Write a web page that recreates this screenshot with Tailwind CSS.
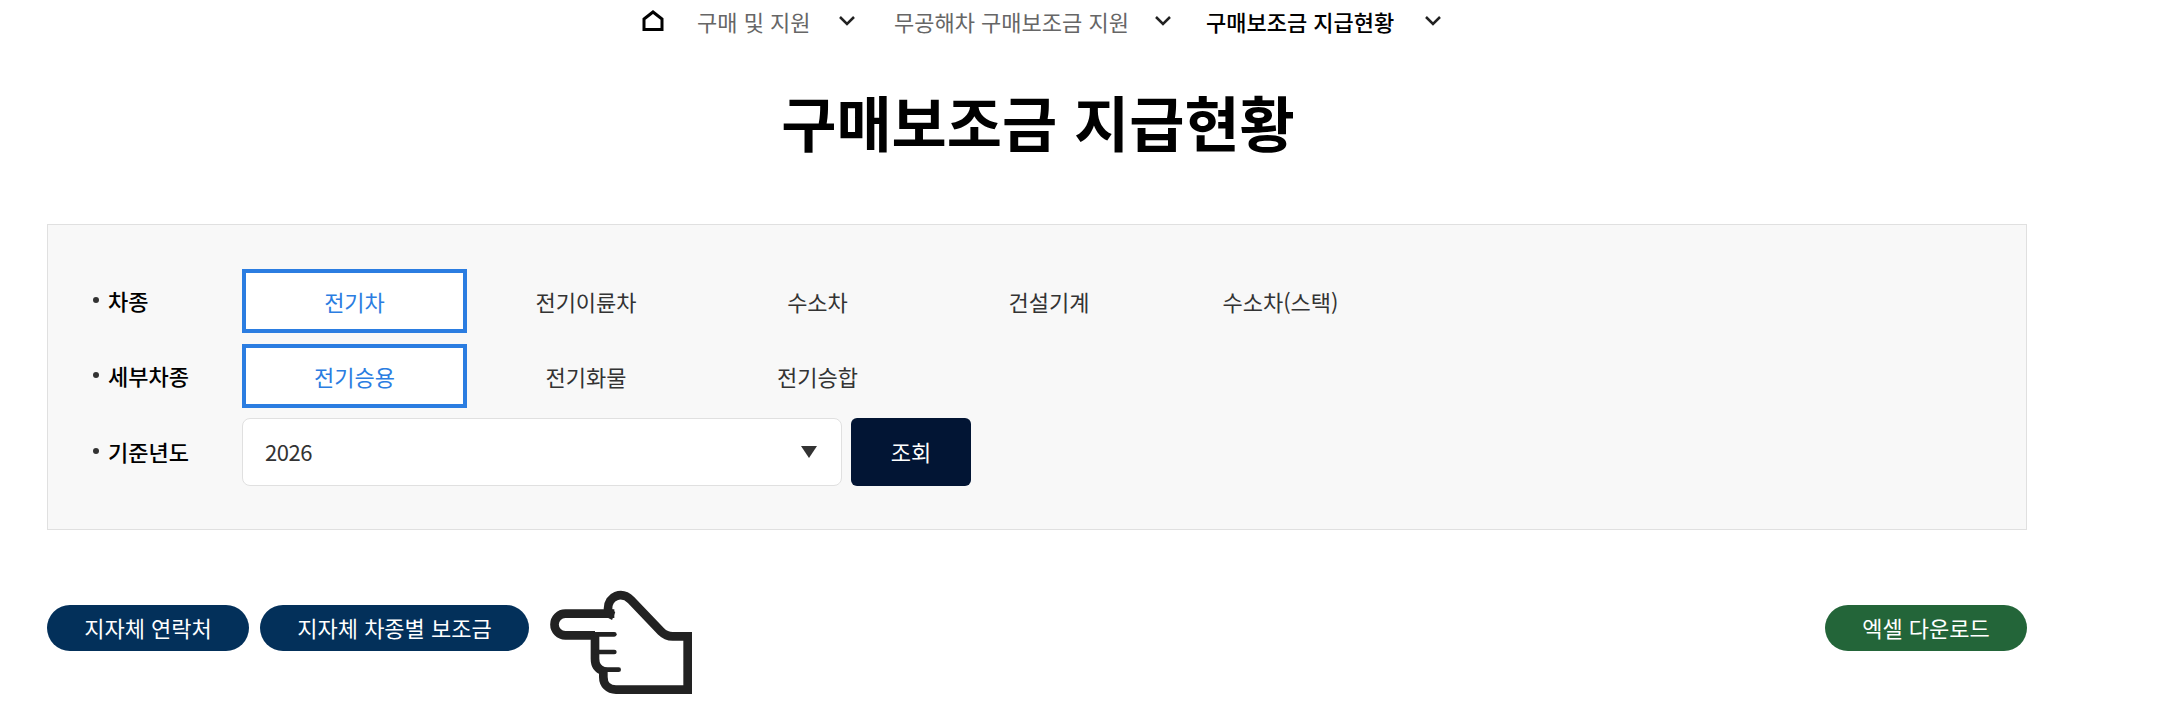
<!DOCTYPE html>
<html lang="ko">
<head>
    <meta charset="UTF-8">
    <meta name="viewport" content="width=device-width, initial-scale=1.0">
    <title>구매보조금 지급현황</title>
    <script src="https://cdn.jsdelivr.net/npm/@tailwindcss/browser@4"></script>
</head>
<body class="bg-white font-['Noto_Sans_CJK_KR','Noto_Sans',sans-serif] text-[#333]">
    <div class="w-[1980px] ml-[47px] h-[715px] overflow-hidden">

        <!-- 상단 경로 -->
        <nav class="h-[44px] flex items-center text-[22px] leading-none pl-[595px] pb-[2px]">
            <svg class="w-[22px] h-[22px]" viewBox="0 0 22 22" fill="none" stroke="#000" stroke-width="3">
                <path d="M2 19.5 L2 9 L11 2 L20 9 L20 19.5 Z"/>
            </svg>
            <span class="ml-[33px] w-[141px] text-[#666]">구매 및 지원</span>
            <svg class="w-[18px] h-[12px]" viewBox="0 0 18 12" fill="none" stroke="#222" stroke-width="2.5"><path d="M2 2 L9 9 L16 2"/></svg>
            <span class="ml-[38px] w-[260px] text-[#666]">무공해차 구매보조금 지원</span>
            <svg class="w-[18px] h-[12px]" viewBox="0 0 18 12" fill="none" stroke="#222" stroke-width="2.5"><path d="M2 2 L9 9 L16 2"/></svg>
            <span class="ml-[34px] w-[218px] font-medium text-black">구매보조금 지급현황</span>
            <svg class="w-[18px] h-[12px]" viewBox="0 0 18 12" fill="none" stroke="#222" stroke-width="2.5"><path d="M2 2 L9 9 L16 2"/></svg>
        </nav>

        <h1 class="mt-[38px] h-[78px] leading-[78px] text-center pl-[2px] text-[60px] font-bold text-black">구매보조금 지급현황</h1>

        <!-- 검색 조건 -->
        <section class="mt-[64px] h-[306px] bg-[#f8f8f8] border border-[#e0e0e0] pt-[44px] pl-[45px] flex flex-col">
            <div class="flex items-center h-[64px]">
                <span class="w-[149px] flex items-center text-[22px] font-medium text-black pb-[2px]"><i class="w-[6px] h-[6px] rounded-full bg-[#333] mr-[9px]"></i>차종</span>
                <div class="flex gap-[6.5px] text-[22px]">
                    <button class="w-[225px] h-[64px] bg-white border-4 border-[#2b7de1] text-[#2b7de1]">전기차</button>
                    <button class="w-[225px] h-[64px]">전기이륜차</button>
                    <button class="w-[225px] h-[64px]">수소차</button>
                    <button class="w-[225px] h-[64px]">건설기계</button>
                    <button class="w-[225px] h-[64px]">수소차(스택)</button>
                </div>
            </div>
            <div class="flex items-center h-[64px] mt-[11px]">
                <span class="w-[149px] flex items-center text-[22px] font-medium text-black pb-[2px]"><i class="w-[6px] h-[6px] rounded-full bg-[#333] mr-[9px]"></i>세부차종</span>
                <div class="flex gap-[6.5px] text-[22px]">
                    <button class="w-[225px] h-[64px] bg-white border-4 border-[#2b7de1] text-[#2b7de1]">전기승용</button>
                    <button class="w-[225px] h-[64px]">전기화물</button>
                    <button class="w-[225px] h-[64px]">전기승합</button>
                </div>
            </div>
            <div class="flex items-center h-[68px] mt-[10px]">
                <span class="w-[149px] flex items-center text-[22px] font-medium text-black pb-[2px]"><i class="w-[6px] h-[6px] rounded-full bg-[#333] mr-[9px]"></i>기준년도</span>
                <div class="w-[600px] h-[68px] bg-white border border-[#e0e0e0] rounded-[8px] flex items-center justify-between pl-[22px] pr-[24px] text-[22px]">
                    <span class="tracking-[-0.5px] pb-[2px]">2026</span>
                    <svg class="w-[16px] h-[12px]" viewBox="0 0 16 12" fill="#333"><path d="M0 0 H16 L8 12 Z"/></svg>
                </div>
                <button class="ml-[9px] w-[120px] h-[68px] pb-[2px] bg-[#021534] text-white text-[22px] rounded-[6px]">조회</button>
            </div>
        </section>

        <!-- 하단 버튼 -->
        <div class="mt-[61px] flex items-start">
            <div class="flex items-center h-[46px] text-[22px] text-white gap-[11px] mt-[14px]">
                <button class="w-[202px] h-[46px] pb-[1px] rounded-full bg-[#03305a]">지자체 연락처</button>
                <button class="w-[269px] h-[46px] pb-[1px] rounded-full bg-[#03305a]">지자체 차종별 보조금</button>
            </div>
            <svg class="ml-[2px] w-[180px] h-[135px] -mt-[15px]" viewBox="0 0 540 405" fill="none" stroke="#222" stroke-width="26" stroke-linecap="round" stroke-linejoin="miter">
                <path stroke-linecap="butt" d="M250 113 L103 113 A32.5 32.5 0 0 0 103 178 L192 178"/>
                <path stroke-linecap="butt" d="M192 172 L192 248 C192 268 202 280 217 285 L217 303 C217 325 232 341 255 341 L470 341 L470 181 L425 181 C408 181 400 176 390 166 L300 72 C272 44 231 60 231 98 C231 108 238 116 248 120"/>
                <path stroke-width="14" d="M192 175 L250 175"/>
                <path stroke-width="14" d="M192 228 L250 228"/>
                <path stroke-width="14" d="M217 281 L263 281"/>
            </svg>
            <button class="ml-auto mt-[14px] w-[202px] h-[46px] pb-[1px] rounded-full bg-[#236539] text-white text-[22px]">엑셀 다운로드</button>
        </div>
    </div>
</body>
</html>
